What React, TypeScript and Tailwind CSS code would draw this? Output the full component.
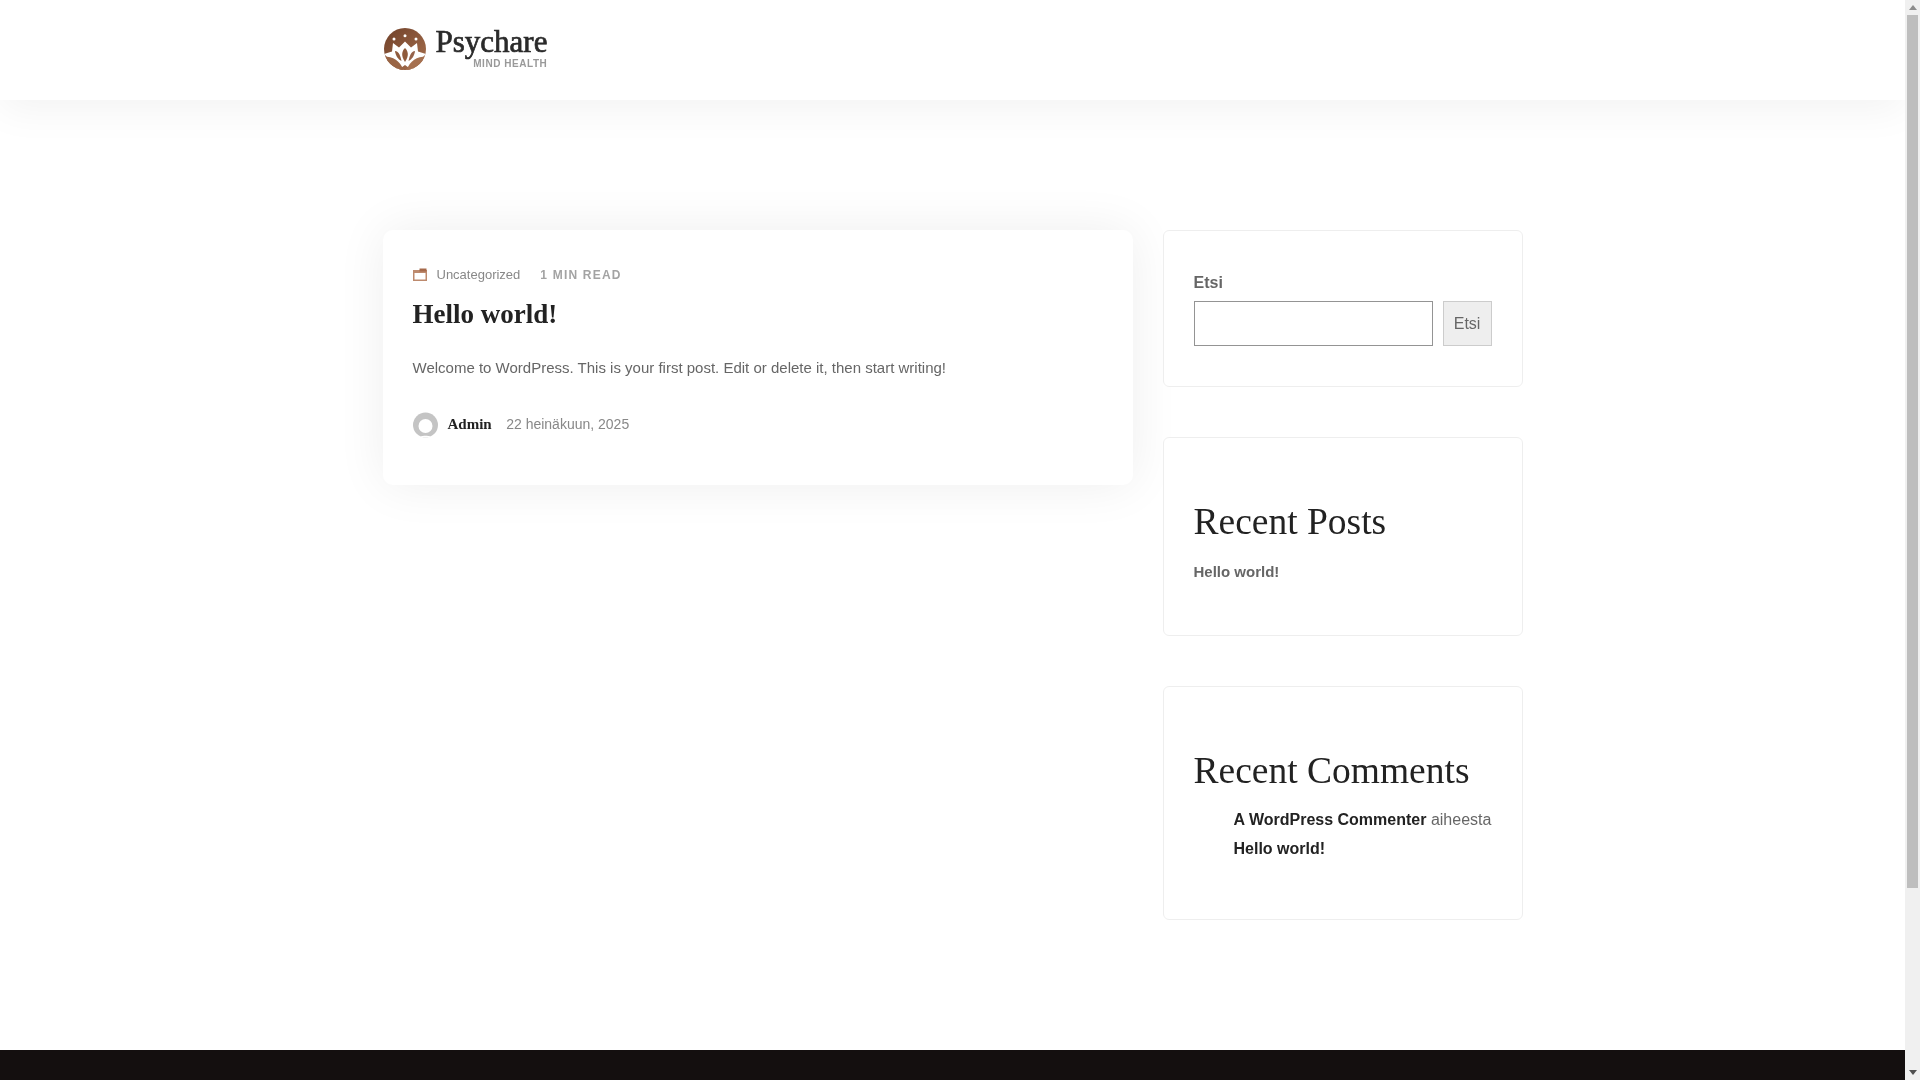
import * as React from 'react'

const sans = 'font-["Liberation_Sans",Arial,sans-serif]'
const serif = 'font-["Liberation_Serif","Times_New_Roman",serif]'

const Logo = () => (
    <div className="flex items-center pl-[1px] -mt-[2px]">
        <svg width="42" height="42" viewBox="0 0 42 42">
            <defs>
                <linearGradient id="logoFill" x1="0" y1="0" x2="1" y2="1">
                    <stop offset="0" stopColor="#6f4029" />
                    <stop offset="1" stopColor="#a9714f" />
                </linearGradient>
                <clipPath id="logoClip">
                    <circle cx="21" cy="21" r="21" />
                </clipPath>
            </defs>
            <g clipPath="url(#logoClip)">
                <rect width="42" height="42" fill="url(#logoFill)" />
                <circle cx="21" cy="7.7" r="1.5" fill="#fff" />
                <circle cx="10" cy="11" r="1.5" fill="#fff" />
                <circle cx="32" cy="11" r="1.5" fill="#fff" />
                <path d="M0 26 L8 23.5 L9 15 L15 19.5 L21 13.5 L27 19.5 L33 15 L34 23.5 L42 26 L34 34 L28 42 L21 37 L14 42 L8 34 Z" fill="#fff" />
                <path d="M21 20 C24.5 23.5 25 28 21 34 C17 28 17.5 23.5 21 20 Z" fill="#8f5b3c" />
                <path d="M11 23 C15 23.5 16.5 28 17.5 33 C14 31.5 11.5 27.5 11 23 Z" fill="#8f5b3c" />
                <path d="M31 23 C27 23.5 25.5 28 24.5 33 C28 31.5 30.5 27.5 31 23 Z" fill="#96634a" />
                <path d="M0 28.5 C9 28.5 17 33 19.5 43 C9 43 3 37 0 28.5 Z" fill="#9a6545" />
                <path d="M42 28.5 C33 28.5 25 33 22.5 43 C33 43 39 37 42 28.5 Z" fill="#a5704f" />
            </g>
        </svg>
        <div className="ml-[10px] flex flex-col items-end">
            <div className={`${serif} text-[31px] leading-[28px] font-normal [-webkit-text-stroke:0.7px_#2a2a2a] text-[#2a2a2a]`}>Psychare</div>
            <div className={`${sans} text-[10px] leading-[12px] mt-[2px] font-bold tracking-[0.55px] text-[#999999]`}>MIND HEALTH</div>
        </div>
    </div>
)

const FolderIcon = () => (
    <svg width="14" height="13" viewBox="0 0 14 13">
        <rect x="0.75" y="2.75" width="12.5" height="9.5" fill="none" stroke="#bd8a6e" strokeWidth="1.5" />
        <rect x="0.5" y="3" width="13" height="2" fill="#bd8a6e" />
        <path d="M6.5 0.5 H13.5 V3.5 H6.5 Z" fill="#a5694a" />
    </svg>
)

const Avatar = () => (
    <svg width="25" height="26" viewBox="0 0 25 26">
        <defs>
            <clipPath id="avatarClip">
                <circle cx="12.5" cy="13" r="12.5" />
            </clipPath>
        </defs>
        <g clipPath="url(#avatarClip)">
            <rect width="25" height="26" fill="#c4c4c4" />
            <circle cx="12.5" cy="14" r="7" fill="#fff" />
            <path d="M4 26 C6 23 19 23 21 26 Z" fill="#fff" />
        </g>
    </svg>
)

const Scrollbar = () => (
    <div className="w-[15px] h-full shrink-0 bg-[#f0f0f0] flex flex-col items-center">
        <div className="h-[15px] flex items-center justify-center">
            <svg width="8" height="5" viewBox="0 0 8 5"><path d="M4 0 L8 5 H0 Z" fill="#8c8c8c" /></svg>
        </div>
        <div className="w-[11px] h-[873px] bg-[#bebebe]" />
        <div className="flex-1" />
        <div className="h-[15px] flex items-center justify-center">
            <svg width="8" height="5" viewBox="0 0 8 5"><path d="M0 0 H8 L4 5 Z" fill="#505050" /></svg>
        </div>
    </div>
)

const Widget = ({ className, children }: { className: string, children: React.ReactNode }) => (
    <div className={`bg-white border border-[#eeeeee] rounded-[6px] px-[30px] ${className}`}>
        {children}
    </div>
)

export default function App() {
    return (
        <div className={`${sans} flex w-full h-screen overflow-hidden will-change-transform`}>
            <div className="flex-1 flex flex-col min-w-0">
                <header className="h-[100px] shrink-0 shadow-[0_10px_40px_rgba(0,0,0,0.05)]">
                    <div className="w-[1140px] h-full mx-auto flex items-center">
                        <Logo />
                    </div>
                </header>

                <main className="flex-1 w-[1140px] mx-auto pt-[130px] flex gap-[30px] items-start">
                    <article className="w-[750px] h-[255px] rounded-[10px] shadow-[0_0_50px_rgba(0,0,0,0.07)] px-[30px] pt-[36px]">
                        <div className="flex items-center h-[17px]">
                            <FolderIcon />
                            <span className="ml-[10px] text-[13px] text-[#888888]">Uncategorized</span>
                            <span className="ml-[20px] text-[12px] font-bold tracking-[1.2px] text-[#a3a3a3]">1 MIN READ</span>
                        </div>
                        <h2 className={`${serif} mt-[11px] text-[27px] leading-[40px] font-bold text-[#222222]`}>Hello world!</h2>
                        <p className="mt-[21px] text-[15px] leading-[26px] text-[#666666]">
                            Welcome to WordPress. This is your first post. Edit or delete it, then start writing!
                        </p>
                        <div className="mt-[30px] flex items-center h-[28px]">
                            <Avatar />
                            <span className={`${serif} ml-[10px] -mt-[2px] text-[15px] font-bold text-[#222222]`}>Admin</span>
                            <span className="ml-[14.5px] -mt-[2px] text-[14px] text-[#888888]">22 heinäkuun, 2025</span>
                        </div>
                    </article>

                    <aside className="w-[360px] flex flex-col">
                        <Widget className="h-[157px] pt-[40px]">
                            <label className="block text-[16px] leading-[24px] font-bold text-[#666666]">Etsi</label>
                            <div className="mt-[6px] flex gap-[10px]">
                                <input className="w-[240px] h-[45px] border border-[#949494] bg-white outline-none" />
                                <button className="w-[49px] h-[45px] border border-[#cccccc] bg-[#eeeeee] text-[16px] text-[#666666]">Etsi</button>
                            </div>
                        </Widget>

                        <Widget className="mt-[50px] h-[199px] pt-[59px]">
                            <h2 className={`${serif} text-[37.5px] leading-[50px] font-normal text-[#222222]`}>Recent Posts</h2>
                            <div className="mt-[13px] text-[15px] leading-[24px] font-bold text-[#666666]">Hello world!</div>
                        </Widget>

                        <Widget className="mt-[50px] h-[234px] pt-[59px]">
                            <h2 className={`${serif} text-[37.5px] leading-[50px] font-normal text-[#222222]`}>Recent Comments</h2>
                            <div className="mt-[9px] pl-[40px] text-[16px] leading-[29px] text-[#666666]">
                                <span className="font-bold text-[#222222]">A WordPress Commenter</span> aiheesta <span className="font-bold text-[#222222]">Hello world!</span>
                            </div>
                        </Widget>
                    </aside>
                </main>

                <footer className="h-[30px] shrink-0 bg-[#140f0f]" />
            </div>
            <Scrollbar />
        </div>
    )
}
